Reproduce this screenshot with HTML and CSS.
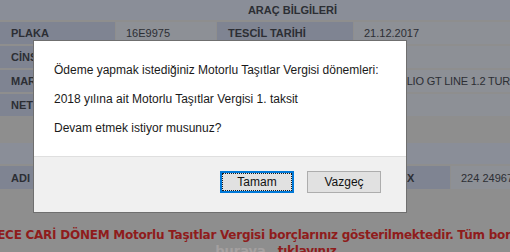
FILE: index.html
```html
<!DOCTYPE html>
<html lang="tr">
<head>
    <meta charset="UTF-8">
    <title>Motorlu Taşıtlar Vergisi</title>
    <link rel="stylesheet" href="styles.css">
</head>
<body>
    <div class="page">
        <table class="info">
            <colgroup>
                <col class="c1"><col class="c2"><col class="c3"><col class="c4">
            </colgroup>
            <tr><th colspan="4" class="head">ARAÇ BİLGİLERİ</th></tr>
            <tr><td class="label">PLAKA</td><td>16E9975</td><td class="label">TESCİL TARİHİ</td><td>21.12.2017</td></tr>
            <tr><td class="label">CİNSİ</td><td>OTOMOBİL</td><td class="label">MODEL YILI</td><td>2017</td></tr>
            <tr><td class="label">MARKA</td><td>RENAULT</td><td class="label">TİPİ</td><td class="shift">NEW CLIO GT LINE 1.2 TURBO</td></tr>
            <tr><td class="label">NET AĞIRLIK</td><td>1090</td><td class="label">MOTOR HACMİ</td><td>1197</td></tr>
        </table>

        <table class="info owner">
            <colgroup>
                <col class="o1"><col class="o2"><col class="o3"><col class="o4">
            </colgroup>
            <tr><th colspan="4" class="head">ARAÇ SAHİBİ BİLGİLERİ</th></tr>
            <tr><td class="label right">ADI</td><td>MEHMET YILMAZ</td><td class="label">FAX</td><td>224 2496789</td></tr>
        </table>

        <div class="notice">
            <span class="line">Aşağıda SADECE CARİ DÖNEM Motorlu Taşıtlar Vergisi borçlarınız gösterilmektedir. Tüm borçlarınızı görmek için</span>
            <span class="line"><a class="link">buraya</a> tıklayınız.</span>
        </div>
    </div>

    <div class="dialog">
        <div class="dialog-body">
            <p>Ödeme yapmak istediğiniz Motorlu Taşıtlar Vergisi dönemleri:</p>
            <p>2018 yılına ait Motorlu Taşıtlar Vergisi 1. taksit</p>
            <p>Devam etmek istiyor musunuz?</p>
        </div>
        <div class="dialog-footer">
            <button class="btn primary">Tamam</button>
            <button class="btn">Vazgeç</button>
        </div>
    </div>
</body>
</html>
```

FILE: styles.css
```css
html, body {
    margin: 0;
    padding: 0;
}
body {
    width: 510px;
    height: 252px;
    overflow: hidden;
    background: #8e8e8e;
    font-family: "Liberation Sans", Arial, sans-serif;
    position: relative;
}
.page {
    width: 586px;
}
.info {
    width: 587px;
    table-layout: fixed;
    border-collapse: separate;
    border-spacing: 1px 2px;
    margin: -2px 0 0 -1px;
    font-size: 11px;
    color: #2c2e34;
}
.info col.c1 { width: 115px; }
.info col.c2 { width: 100px; }
.info col.c3 { width: 136px; }
.info col.o1 { width: 265px; }
.info col.o2 { width: 115px; }
.info col.o3 { width: 68px; }
.info th, .info td {
    height: 22px;
    padding: 0 0 0 10px;
    background: #8d9096;
    white-space: nowrap;
    overflow: hidden;
    text-align: left;
    font-weight: normal;
}
.info th.head {
    height: 20px;
    background: #8a8e98;
    text-align: center;
    font-weight: bold;
    padding: 0;
}
.info td.label {
    background: #7f8492;
    font-weight: bold;
    padding-left: 11px;
}
.info td.shift {
    padding-left: 17px;
    letter-spacing: -0.2px;
}
.owner {
    margin-top: 23px;
}
.owner th.head {
    height: 21px;
}
.owner td {
    height: 23px;
}
.owner td.right {
    padding-left: 11px;
}
.notice {
    width: 556px;
    margin-top: 36px;
    display: flex;
    flex-direction: column;
    align-items: center;
    font-family: "DejaVu Sans", Verdana, sans-serif;
    font-size: 12px;
    font-weight: bold;
    letter-spacing: -0.25px;
    line-height: 16px;
    color: #8f1c1c;
}
.notice .line {
    white-space: nowrap;
}
.notice .link {
    color: #a4a0a0;
    font-size: 13px;
    letter-spacing: 0;
    margin-right: 8px;
}

.dialog {
    position: absolute;
    left: 33px;
    top: 40px;
    width: 372px;
    height: 171px;
    border: 1px solid #6f6f6f;
    background: #fff;
    display: flex;
    flex-direction: column;
    font-family: "Liberation Sans", Arial, sans-serif;
    font-size: 12px;
    color: #1a1a1a;
}
.dialog-body {
    flex: 1;
    padding: 21px 20px 0 20px;
}
.dialog-body p {
    margin: 0 0 13px 0;
    line-height: 16px;
}
.dialog-footer {
    height: 56px;
    background: #f0f0f0;
    border-top: 1px solid #dfdfdf;
    display: flex;
    justify-content: flex-end;
    align-items: flex-start;
    gap: 13px;
    padding: 14px 25px 0 0;
    box-sizing: border-box;
}
.btn {
    width: 74px;
    height: 22px;
    background: #e1e1e1;
    border: 1px solid #adadad;
    font-family: "Liberation Sans", Arial, sans-serif;
    font-size: 12px;
    color: #111;
    padding: 0;
}
.btn.primary {
    border: 1px solid #0078d7;
    outline: 1px dotted #1a1a1a;
    outline-offset: -3px;
    box-shadow: inset 0 0 0 1px #0078d7;
}
```
